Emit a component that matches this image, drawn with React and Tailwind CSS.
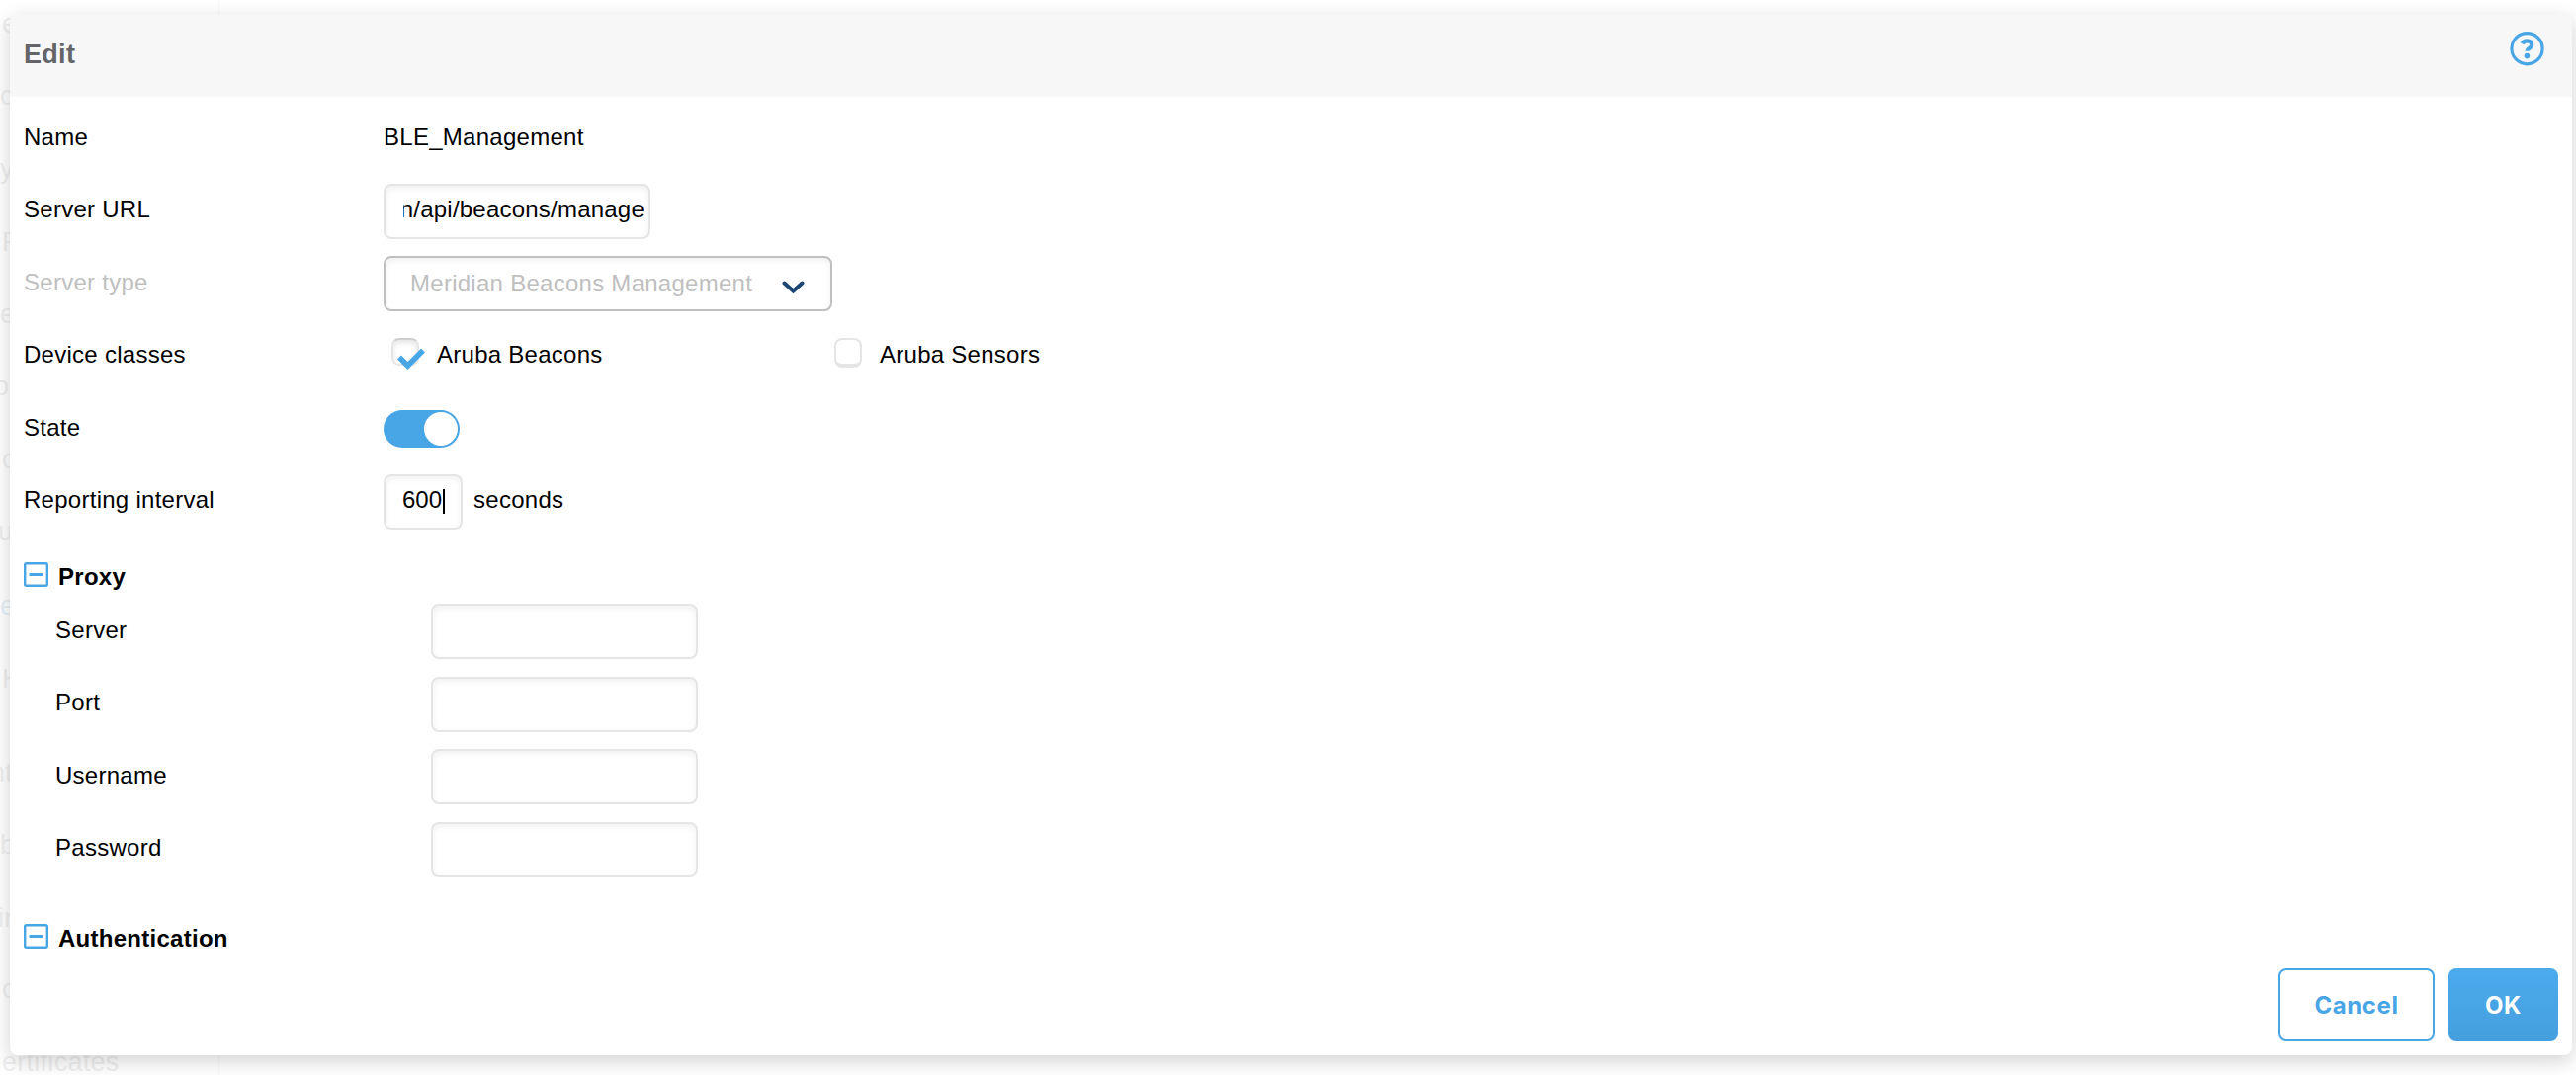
const field =
  'border-2 border-[#e5e5e5] rounded-[8px] bg-white shadow-[inset_0_3px_6px_rgba(0,0,0,0.06)]';

function Row({ label, muted, snug, children }) {
  return (
    <div className="flex h-[73.5px] items-start">
      <div
        className={`w-[364px] shrink-0 ${snug ? 'leading-[52px]' : 'leading-[53px]'} ${muted ? 'text-[#bfbfbf]' : ''}`}
      >
        {label}
      </div>
      {children}
    </div>
  );
}

function ProxyRow({ label, snug }) {
  return (
    <div className="flex h-[73.5px] items-start">
      <div className={`w-[380px] shrink-0 ${snug ? 'leading-[52px]' : 'leading-[53px]'}`}>{label}</div>
      <div className={`h-[56px] w-[270px] ${field}`} />
    </div>
  );
}

function Section({ title }) {
  return (
    <div className="flex h-[30px] items-start">
      <svg width="25" height="25" viewBox="0 0 25 25" fill="none" className="mr-[10px] shrink-0">
        <rect x="1.2" y="1.2" width="22.6" height="22.6" rx="1.5" stroke="#48a5e6" strokeWidth="2.4" />
        <path d="M5.5 12.5h14" stroke="#48a5e6" strokeWidth="3" />
      </svg>
      <div className="font-bold leading-[29px]">{title}</div>
    </div>
  );
}

const behind = [
  ['e', 8, 2, false],
  ['c', 81, 0, false],
  ['y', 155, 0, false],
  ['R', 229, 2, false],
  ['e', 302, 0, false],
  ['o', 375, -6, false],
  ['c', 449, 2, false],
  ['u', 522, -2, false],
  ['e', 597, 0, true],
  ['H', 671, 2, false],
  ['nt', 766, -10, false],
  ['b', 839, 0, false],
  ['in', 913, -2, false],
  ['c', 985, 2, false],
  ['ertificates', 1059, 2, false],
];

export default function App() {
  return (
    <div
      className="relative h-[1088px] w-[2606px] overflow-hidden bg-white text-[24px] tracking-[0.27px] text-black"
      style={{ fontFamily: '"Liberation Sans", Arial, sans-serif' }}
    >
      <div className="absolute inset-0">
        <div className="h-full w-[222px] border-r border-[#f8f8f8]" />
        {behind.map(([t, y, x, blue], i) => (
          <span
            key={i}
            className={`absolute text-[27px] leading-[32px] ${blue ? 'text-[#e6f1f9]' : 'text-[#efefef]'}`}
            style={{ top: y, left: x }}
          >
            {t}
          </span>
        ))}
      </div>

      <div className="relative mt-[14px] ml-[10px] flex h-[1054px] w-[2592px] flex-col rounded-[8px] bg-white shadow-[0_6px_20px_rgba(0,0,0,0.18)]">
        <header className="flex h-[84px] shrink-0 items-start justify-between rounded-t-[8px] bg-[#f7f7f7] pr-[28px] pl-[14px]">
          <h1 className="pt-[24px] text-[27px] leading-[34px] font-bold tracking-[0.3px] text-[#646569]">Edit</h1>
          <svg width="35" height="35" viewBox="0 0 35 35" fill="none" className="mt-[18px]">
            <circle cx="17.5" cy="17.2" r="15.6" stroke="#48a5e6" strokeWidth="3.2" />
            <path
              d="M12.6 12.2c1-2 2.6-2.9 4.8-2.9 2.9 0 4.8 1.5 4.8 3.9 0 3.7-4.8 3.7-4.8 6.6"
              stroke="#48a5e6"
              strokeWidth="4.2"
            />
            <circle cx="17.4" cy="24.6" r="2.8" fill="#48a5e6" />
          </svg>
        </header>

        <main className="flex-1 pt-[14.25px] pl-[14px]">
          <Row label="Name">
            <div className="leading-[53px]">BLE_Management</div>
          </Row>
          <Row label="Server URL" snug>
            <div className={`h-[56px] w-[270px] pr-[4px] pl-[18px] ${field}`}>
              <div className="flex justify-end overflow-hidden leading-[48px] tracking-[0.22px] whitespace-nowrap">
                <span>n/api/beacons/manage</span>
              </div>
            </div>
          </Row>
          <Row label="Server type" muted>
            <div className="flex h-[56px] w-[454px] items-start justify-between rounded-[8px] border-2 border-[#bfbfbf] bg-white pr-[26px] pl-[25px] leading-[51px] text-[#bfbfbf] shadow-[inset_0_3px_6px_rgba(0,0,0,0.06)]">
              <span>Meridian Beacons Management</span>
              <svg width="23" height="14" viewBox="0 0 23 14" fill="none" className="mt-[23px]">
                <path d="M2.5 2.5L11.5 10.5L20.5 2.5" stroke="#1c4674" strokeWidth="4" strokeLinecap="round" />
              </svg>
            </div>
          </Row>
          <Row label="Device classes" snug>
            <div className="flex w-[456px] items-start pl-[8px]">
              <div className="relative mt-[9px] mr-[18px] h-[28px] w-[28px] rounded-[8px] border-2 border-[#e5e5e5] border-t-[#cfcfcf] shadow-[inset_0_3px_5px_rgba(0,0,0,0.1)]">
                <svg width="28" height="22" viewBox="0 0 28 22" fill="none" className="absolute top-[8px] left-[4px]">
                  <path d="M2 9.5L10.5 18L26 2.5" stroke="#48a5e6" strokeWidth="5.6" />
                </svg>
              </div>
              <span className="leading-[52px]">Aruba Beacons</span>
            </div>
            <div className="mt-[9px] mr-[18px] h-[30px] w-[28px] rounded-[8px] border-2 border-b-4 border-[#e5e5e5]" />
            <span className="leading-[52px]">Aruba Sensors</span>
          </Row>
          <Row label="State">
            <div className="mt-[8.75px] flex h-[38px] w-[77px] items-center justify-end rounded-full bg-[#48a5e6] pr-[2px]">
              <div className="h-[34px] w-[34px] rounded-full bg-white" />
            </div>
          </Row>
          <Row label="Reporting interval" snug>
            <div className={`flex h-[56px] w-[80px] items-start pl-[17px] leading-[48px] ${field}`}>
              <span className="tracking-normal">600</span>
              <span className="mt-[13px] ml-[1px] h-[25px] w-[2px] bg-black" />
            </div>
            <span className="pl-[11px] leading-[52px]">seconds</span>
          </Row>

          <div className="pt-[15.5px]">
            <Section title="Proxy" />
          </div>
          <div className="pt-[12.25px] pl-[32px]">
            <ProxyRow label="Server" />
            <ProxyRow label="Port" snug />
            <ProxyRow label="Username" />
            <ProxyRow label="Password" snug />
          </div>
          <div className="pt-[30px]">
            <Section title="Authentication" />
          </div>
        </main>

        <footer
          className="flex shrink-0 justify-end gap-[14px] pr-[14px] pb-[14px] text-[24px] font-bold tracking-[0.6px]"
          style={{ fontFamily: 'Inter, sans-serif' }}
        >
          <button className="h-[74px] w-[158px] rounded-[8px] border-2 border-[#48a5e6] bg-white pt-[2px] text-[#48a5e6]">Cancel</button>
          <button className="h-[74px] w-[111px] rounded-[8px] bg-linear-to-b from-[#4babed] to-[#459fde] pt-[2px] text-white">OK</button>
        </footer>
      </div>
    </div>
  );
}
